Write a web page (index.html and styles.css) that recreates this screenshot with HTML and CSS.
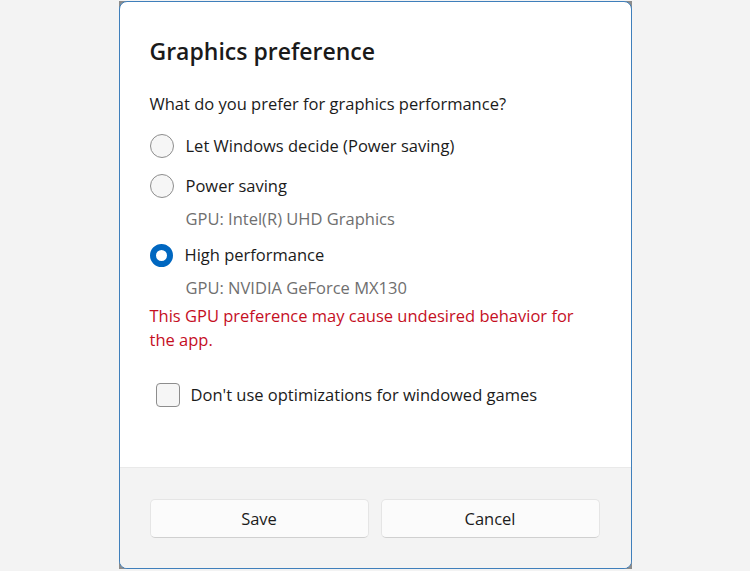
FILE: index.html
```html
<!DOCTYPE html>
<html lang="en">
<head>
  <meta charset="UTF-8">
  <meta name="viewport" content="width=device-width, initial-scale=1.0">
  <title>Graphics preference</title>
  <link rel="stylesheet" href="styles.css">
</head>
<body>

<div class="backdrop">
  <div class="frame">
    <div class="dialog">
      <div class="content">
        <h1 class="title">Graphics preference</h1>
        <p class="question">What do you prefer for graphics performance?</p>

        <div class="option first">
          <span class="radio"></span>
          <span class="label">Let Windows decide (Power saving)</span>
        </div>

        <div class="option">
          <span class="radio"></span>
          <span class="label">Power saving</span>
        </div>
        <p class="gpu">GPU: Intel(R) UHD Graphics</p>

        <div class="option">
          <span class="radio checked"></span>
          <span class="label">High performance</span>
        </div>
        <p class="gpu">GPU: NVIDIA GeForce MX130</p>

        <p class="warning">This GPU preference may cause undesired behavior for the app.</p>

        <div class="check-row">
          <span class="checkbox"></span>
          <span class="label">Don't use optimizations for windowed games</span>
        </div>
      </div>

      <div class="footer">
        <button class="btn">Save</button>
        <button class="btn">Cancel</button>
      </div>
    </div>
  </div>
</div>

</body>
</html>
```

FILE: styles.css
```css
body {
  margin: 0;
  font-family: "Open Sans", "Noto Sans", sans-serif;
  background-color: #f3f3f3;
  color: #1b1b1b;
}
.backdrop {
  display: flex;
  justify-content: center;
  padding-top: 1px;
}
.frame {
  background-color: #8c8c8c;
}
.dialog {
  width: 511px;
  height: 566px;
  background-color: #fff;
  border: 1px solid #3f7fbb;
  border-radius: 8px;
  display: flex;
  flex-direction: column;
  overflow: hidden;
}
.content {
  flex: 1;
  padding: 33px 31px 0 30px;
}
.title {
  margin: 0;
  font-size: 23px;
  font-weight: 600;
  line-height: 32px;
  color: #1a1a1a;
}
.question {
  margin: 25px 0 0 0;
  font-size: 16.5px;
  line-height: 24px;
}
.option {
  display: flex;
  align-items: center;
  gap: 12px;
  height: 24px;
  margin-top: 16px;
}
.option.first {
  margin-top: 18px;
}
.radio {
  width: 22px;
  height: 22px;
  border: 1px solid #8d8d8d;
  border-radius: 50%;
  background-color: #f6f6f6;
  box-sizing: content-box;
}
.radio.checked {
  width: 11px;
  height: 11px;
  border: 6.5px solid #0067c0;
  background-color: #fff;
}
.label {
  font-size: 16.5px;
  line-height: 24px;
}
.gpu {
  margin: 9px 0 12px 36px;
  font-size: 16.5px;
  line-height: 24px;
  color: #6f6f6f;
}
.gpu + .option {
  margin-top: 0;
}
.warning {
  margin: -8px 0 0 0;
  font-size: 16.5px;
  line-height: 24px;
  color: #c50f1f;
}
.check-row {
  display: flex;
  align-items: center;
  gap: 11px;
  height: 24px;
  margin: 31px 0 0 6px;
}
.checkbox {
  width: 22px;
  height: 22px;
  border: 1px solid #8d8d8d;
  border-radius: 4px;
  background-color: #f6f6f6;
}
.footer {
  height: 101px;
  background-color: #f3f3f3;
  border-top: 1px solid #e9e9e9;
  box-sizing: border-box;
  padding: 31px 31px 0 30px;
  display: grid;
  grid-template-columns: 1fr 1fr;
  gap: 12px;
  align-items: start;
}
.btn {
  height: 39px;
  font-family: inherit;
  font-size: 16.5px;
  color: #1b1b1b;
  background-color: #fbfbfb;
  border: 1px solid #e5e5e5;
  border-bottom-color: #d0d0d0;
  border-radius: 5px;
}
```
